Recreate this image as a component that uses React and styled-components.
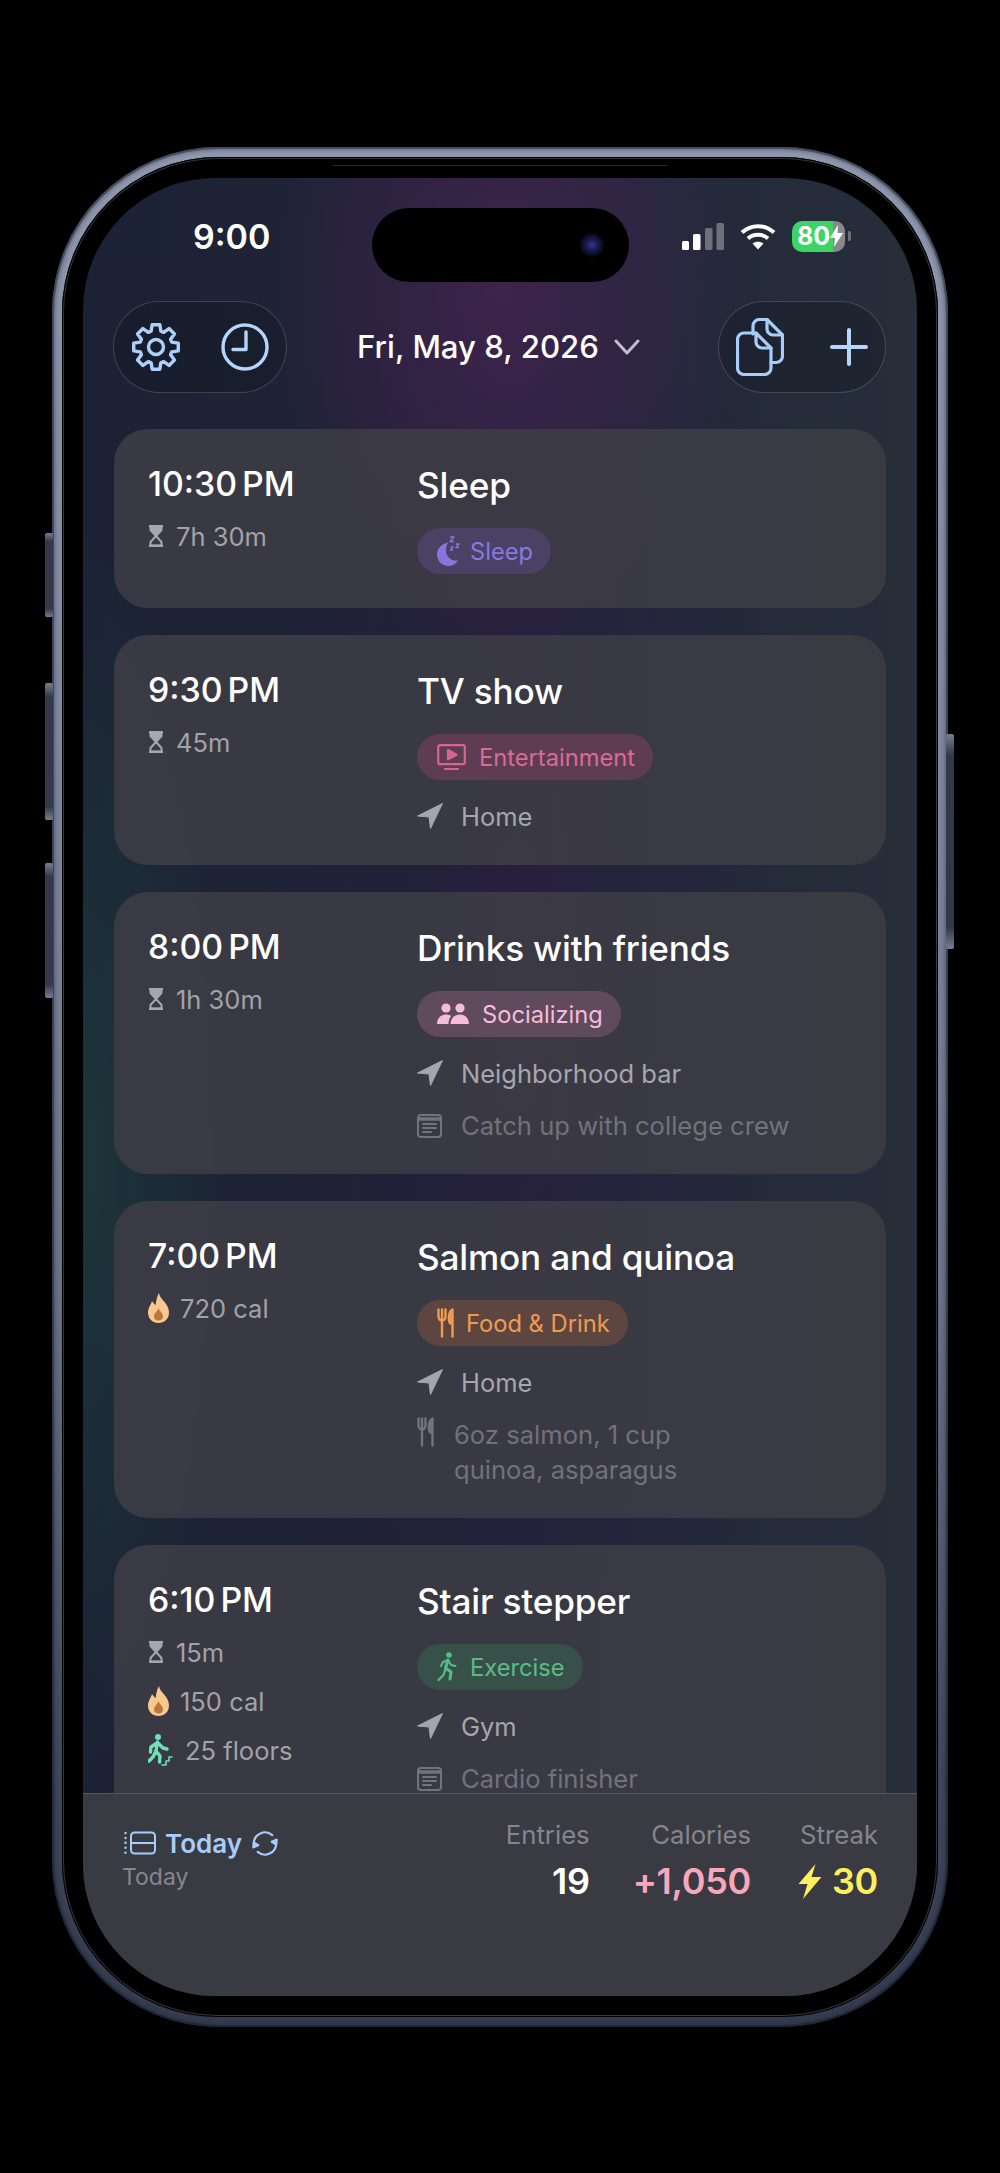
import React from "react";
import styled, { createGlobalStyle } from "styled-components";

const GlobalStyle = createGlobalStyle`
  html, body {
    margin: 0;
    background: #000;
  }
  body {
    width: 1000px;
    height: 2173px;
    overflow: hidden;
    font-family: Inter, "Liberation Sans", sans-serif;
  }
`;

const Page = styled.div`
  width: 1000px;
  height: 2173px;
  padding: 147px 0 0 52px;
  box-sizing: border-box;
`;

const Frame = styled.div`
  position: relative;
  width: 896px;
  height: 1880px;
  box-sizing: border-box;
  padding: 10px;
  border-radius: 166px;
  background: linear-gradient(180deg, #8f97ae 0%, #7f88a0 30%, #6a7389 60%, #3f475c 86%, #343b4f 100%);
  box-shadow: inset 0 0 0 2px rgba(18, 22, 34, 0.45), inset 0 0 3px 4px rgba(30, 34, 48, 0.25);
`;

const SideButton = styled.div`
  position: absolute;
  top: ${(p) => p.$top}px;
  height: ${(p) => p.$h}px;
  ${(p) => (p.$right ? "right: -6px;" : "left: -7px;")}
  width: 8px;
  border-radius: 2px;
  background: linear-gradient(180deg, #767e94, #333949 10%, #333949 90%, #767e94);
`;

const Bezel = styled.div`
  position: relative;
  height: 100%;
  box-sizing: border-box;
  padding: 21px;
  border-radius: 156px;
  background: #000;
  box-shadow: inset 0 0 0 1px #000, inset 0 0 0 2px #34363c;
`;

const Rim = styled.div`
  position: absolute;
  top: 8px;
  left: 270px;
  width: 336px;
  height: 1px;
  background: #24262c;
`;

const Screen = styled.div`
  position: relative;
  height: 100%;
  display: flex;
  flex-direction: column;
  overflow: hidden;
  border-radius: 132px;
  color: #fff;
  background:
    radial-gradient(ellipse 240px 380px at 50% 110px, rgba(78, 36, 88, 0.6), transparent 100%),
    radial-gradient(ellipse 260px 1100px at 52% 800px, rgba(46, 26, 68, 0.5), transparent 100%),
    radial-gradient(ellipse 150px 620px at 0% 980px, rgba(28, 72, 62, 0.5), transparent 100%),
    linear-gradient(90deg, #1c2235 0%, #1f2335 40%, #22283a 70%, #272e39 100%);
`;

const StatusBar = styled.div`
  height: 116px;
  margin-bottom: 7px;
  padding: 0 66px 0 110px;
  display: flex;
  align-items: center;
  justify-content: space-between;
`;

const Clock = styled.span`
  font-size: 34px;
  font-weight: 600;
`;

const Island = styled.div`
  position: absolute;
  top: 30px;
  left: 289px;
  width: 257px;
  height: 74px;
  border-radius: 37px;
  background: #000;
`;

const Lens = styled.div`
  position: absolute;
  top: 25px;
  right: 25px;
  width: 24px;
  height: 24px;
  border-radius: 50%;
  background: radial-gradient(circle, #2f3590 0%, #181a4c 36%, #07070f 70%, #050509 100%);
`;

const StatusIcons = styled.div`
  display: flex;
  align-items: center;
  gap: 16px;
`;

const Battery = styled.div`
  display: flex;
  align-items: center;
  width: 53px;
  height: 31px;
  padding-left: 5px;
  box-sizing: border-box;
  border-radius: 10px;
  font-size: 25px;
  font-weight: 700;
  line-height: 1;
  background: linear-gradient(90deg, #3dd466 78%, #87878c 78%);
`;

const BatteryTip = styled.div`
  width: 3px;
  height: 10px;
  margin-left: -13px;
  border-radius: 0 2px 2px 0;
  background: #6d6f76;
`;

const Toolbar = styled.div`
  padding: 0 31px 0 30px;
  display: flex;
  align-items: center;
  justify-content: space-between;
`;

const Pill = styled.div`
  width: ${(p) => p.$w}px;
  height: 92px;
  box-sizing: border-box;
  padding: 0 17px;
  display: flex;
  align-items: center;
  justify-content: space-between;
  border-radius: 46px;
  border: 1.5px solid rgba(255, 255, 255, 0.17);
  background: rgba(16, 18, 26, 0.28);
`;

const DateButton = styled.div`
  display: flex;
  align-items: center;
  gap: 15px;
  font-size: 31.2px;
  font-weight: 500;
  margin-right: 8px;
`;

const List = styled.div`
  flex: 1;
  min-height: 0;
  overflow: hidden;
  padding: 36px 31px 0;
  display: flex;
  flex-direction: column;
  gap: 27px;
`;

const Card = styled.div`
  flex: none;
  min-height: 179px;
  box-sizing: border-box;
  padding: 36px 34px 31px;
  display: grid;
  grid-template-columns: 269px 1fr;
  border-radius: 34px;
  background: rgba(60, 60, 68, 0.92);
`;

const Side = styled.div`
  display: flex;
  flex-direction: column;
  gap: 13px;
`;

const Time = styled.div`
  height: 40px;
  line-height: 38px;
  font-size: 33.8px;
  font-weight: 500;
  word-spacing: -4px;
`;

const Meta = styled.div`
  height: 36px;
  display: flex;
  align-items: center;
  gap: ${(p) => p.$gap || 12}px;
  font-size: 25.5px;
  color: #a1a2aa;
`;

const Main = styled.div`
  display: flex;
  flex-direction: column;
  align-items: flex-start;
  gap: 17px;
`;

const Title = styled.div`
  height: 40px;
  margin-bottom: 6px;
  line-height: 40px;
  font-size: 35.2px;
  font-weight: 500;
  letter-spacing: -0.2px;
`;

const Chip = styled.div`
  height: 46px;
  box-sizing: border-box;
  padding: 0 18px 0 20px;
  display: flex;
  align-items: center;
  gap: ${(p) => p.$gap}px;
  border-radius: 23px;
  font-size: 23.7px;
  color: ${(p) => p.$color};
  background: ${(p) => p.$bg};
`;

const Place = styled.div`
  height: 36px;
  margin-top: 1px;
  display: flex;
  align-items: center;
  gap: 18px;
  font-size: 25.5px;
  color: #a6a6ae;
`;

const Note = styled.div`
  display: flex;
  align-items: ${(p) => (p.$top ? "flex-start" : "center")};
  gap: ${(p) => p.$gap}px;
  font-size: 25.6px;
  line-height: 35px;
  color: #71727a;
`;

const Footer = styled.div`
  flex: none;
  height: 203px;
  box-sizing: border-box;
  padding: 22px 39px 0 39px;
  display: flex;
  justify-content: space-between;
  border-top: 1.5px solid #55565d;
  background: linear-gradient(90deg, #393b42, #3a3a43);
`;

const Range = styled.div`
  padding-top: 4px;
`;

const RangeTop = styled.div`
  display: flex;
  align-items: center;
  height: 46px;
  padding-left: 2px;
  gap: 9px;
  font-size: 26px;
  font-weight: 600;
  color: #a9cdfb;
`;

const RangeSub = styled.div`
  margin-top: -6px;
  line-height: 34px;
  font-size: 23px;
  color: #86878e;
`;

const Stats = styled.div`
  display: flex;
`;

const Stat = styled.div`
  margin-left: ${(p) => p.$gap || 0}px;
  display: flex;
  flex-direction: column;
  align-items: flex-end;
`;

const StatLabel = styled.div`
  line-height: 38px;
  font-size: 25.7px;
  color: #85868d;
`;

const StatValue = styled.div`
  margin-top: 5px;
  display: flex;
  align-items: center;
  gap: 10px;
  line-height: 44px;
  font-size: 36px;
  font-weight: 600;
  letter-spacing: -0.3px;
  color: ${(p) => p.$color};
`;

const gearPath = () => {
  const pts = [];
  for (let i = 0; i < 8; i++) {
    const a = (i * Math.PI) / 4 - Math.PI / 2;
    [
      [16.5, -0.3],
      [22.6, -0.17],
      [22.6, 0.17],
      [16.5, 0.3],
    ].forEach(([r, d]) => {
      pts.push(`${(25 + r * Math.cos(a + d)).toFixed(2)} ${(25 + r * Math.sin(a + d)).toFixed(2)}`);
    });
  }
  return `M${pts.join(" L")} Z`;
};

const Gear = () => (
  <svg width="50" height="50" viewBox="0 0 50 50" fill="none" stroke="#add0fb" strokeWidth="3.4" strokeLinejoin="round">
    <path d={gearPath()} />
    <circle cx="25" cy="25" r="7.5" />
  </svg>
);

const ClockIcon = () => (
  <svg width="48" height="48" viewBox="0 0 48 48" fill="none" stroke="#b4d4fb" strokeWidth="3.4" strokeLinecap="round" strokeLinejoin="round">
    <circle cx="24" cy="24" r="22" />
    <path d="M25 9 V26.5 H12" />
  </svg>
);

const CopyIcon = () => (
  <svg width="48" height="58" viewBox="0 0 48 58" fill="none" stroke="#a9cdfb" strokeWidth="3.2" strokeLinecap="round" strokeLinejoin="round">
    <path d="M8 15 H20 L35 30 V50 a6.5 6.5 0 0 1 -6.5 6.5 H8 a6.5 6.5 0 0 1 -6.5 -6.5 V21.5 a6.5 6.5 0 0 1 6.5 -6.5 Z" />
    <path d="M20 15 V24 a6 6 0 0 0 6 6 H35" />
    <path d="M17 16 V8 a6.5 6.5 0 0 1 6.5 -6.5 H31 L46.5 17 V38 a6.5 6.5 0 0 1 -6.5 6.5 H35" />
    <path d="M31 1.5 V11 a6 6 0 0 0 6 6 H46.5" />
  </svg>
);

const PlusIcon = () => (
  <svg width="38" height="38" viewBox="0 0 38 38" stroke="#b6d6fc" strokeWidth="4" strokeLinecap="round">
    <path d="M19 2 V36 M2 19 H36" />
  </svg>
);

const Chevron = () => (
  <svg width="26" height="16" viewBox="0 0 26 16" fill="none" stroke="#c3bccb" strokeWidth="3" strokeLinecap="round" strokeLinejoin="round">
    <path d="M2 2 L13 14 L24 2" />
  </svg>
);

const Signal = () => (
  <svg width="42" height="27" viewBox="0 0 42 27">
    <rect x="0" y="18" width="7" height="9" rx="1.5" fill="#fff" />
    <rect x="11" y="11" width="7.5" height="16" rx="1.5" fill="#fff" />
    <rect x="23" y="5" width="7.5" height="22" rx="1.5" fill="#6f7079" />
    <rect x="34.5" y="0" width="7.5" height="27" rx="1.5" fill="#6f7079" />
  </svg>
);

const Wifi = () => (
  <svg width="36" height="27" viewBox="0 0 36 27" fill="none" stroke="#fff" strokeWidth="4">
    <path d="M2 9.5 C11 1 25 1 34 9.5" />
    <path d="M8 15.5 C13.5 10.5 22.5 10.5 28 15.5" />
    <path d="M18 26.5 L12.5 20.5 C15.5 18 20.5 18 23.5 20.5 Z" fill="#fff" stroke="none" />
  </svg>
);

const BoltSmall = () => (
  <svg width="13" height="22" viewBox="0 0 13 22" fill="#fff">
    <path d="M8 0 L0 13 H5 L4 22 L13 8 H7.5 Z" />
  </svg>
);

const Hourglass = () => (
  <svg width="16" height="22" viewBox="0 0 16 22" fill="none" stroke="#a6a7ae" strokeWidth="2" strokeLinejoin="round">
    <path d="M1 1 H15 M1 21 H15" strokeWidth="2.4" />
    <path d="M2.5 1.5 V5 L8 11 L13.5 5 V1.5 Z" fill="#a6a7ae" />
    <path d="M8 11 L2.5 17 V20.5 H13.5 V17 Z" />
  </svg>
);

const Flame = () => (
  <svg width="21" height="30" viewBox="0 0 21 30">
    <path d="M11 0 C12 7 21 10 21 19.5 C21 26 16 30 10.5 30 C5 30 0 26 0 19.5 C0 14.5 3 12 4 8 C5.5 10 6.5 11.5 7.5 12 C8.5 8 8.5 4 11 0 Z" fill="#f9c891" />
    <path d="M10.5 15 C11 18 15 20 15 23.5 C15 26 13 27.5 10.5 27.5 C8 27.5 6 26 6 23.5 C6 20 9.5 18.5 10.5 15 Z" fill="#b9793d" />
  </svg>
);

const Climber = () => (
  <svg width="25" height="32" viewBox="0 0 25 32" fill="none" stroke="#6fe0b8" strokeLinecap="round" strokeLinejoin="round">
    <circle cx="10" cy="3" r="3" fill="#6fe0b8" stroke="none" />
    <path d="M9.5 8 L8 17 M9 9 L3 13 L2.5 18 M10 9 L15 14 L19 15" strokeWidth="3.4" />
    <path d="M8 17 L12 22 L11.5 28 M8 17 L5 23 L1 27" strokeWidth="3.4" />
    <path d="M14 31 H18 V27 H21 V23 H24" strokeWidth="1.6" />
  </svg>
);

const Moon = () => (
  <svg width="23" height="30" viewBox="0 0 23 30" fill="none">
    <path d="M11 6.5 C4 8 0 13 0 18.5 C0 25 5 30 11.5 30 C15.5 30 19 28 21 24.5 C14 25.5 8.5 20 9 13.5 C9.2 11 10 8.5 11 6.5 Z" fill="#8875dc" />
    <path d="M13 1 H17 L13 5.5 H17 M19 8 H22 L19 11.5 H22 M13.5 11 H16 L13.5 14 H16" stroke="#8875dc" strokeWidth="1.4" strokeLinejoin="round" />
  </svg>
);

const TvPlay = () => (
  <svg width="29" height="26" viewBox="0 0 29 26" fill="none" stroke="#d8658f" strokeWidth="2.2" strokeLinecap="round" strokeLinejoin="round">
    <rect x="1.2" y="1.2" width="26.6" height="19" rx="2" />
    <path d="M8 25 H21" />
    <path d="M11 6 L19.5 10.7 L11 15.4 Z" fill="#d8658f" />
  </svg>
);

const Users = () => (
  <svg width="32" height="22" viewBox="0 0 32 22" fill="#f5bcdc">
    <circle cx="9" cy="5" r="4.6" />
    <circle cx="23" cy="5" r="4.6" />
    <path d="M0 21 C0 15 4 11.5 9 11.5 C11 11.5 12.8 12 14.2 13 C12.4 15 11.6 17.5 11.4 21 Z" />
    <path d="M13.6 21 C13.6 15 17.6 11.5 23 11.5 C28 11.5 32 15 32 21 Z" />
  </svg>
);

const Utensils = ({ color = "#ef9a52" }) => (
  <svg width="18" height="30" viewBox="0 0 18 30" fill="none" stroke={color} strokeWidth="2.4" strokeLinecap="round" strokeLinejoin="round">
    <path d="M1.5 1.5 V8 C1.5 11 3 12.5 5 12.5 C7 12.5 8.5 11 8.5 8 V1.5 M5 1.5 V28.5" />
    <path d="M15.5 28.5 V1.5 C12.5 3 11.8 7 11.8 10.5 C11.8 14 13 16 15.5 16" fill={color} />
  </svg>
);

const Runner = () => (
  <svg width="20" height="30" viewBox="0 0 20 30" fill="none" stroke="#58bd85" strokeLinecap="round" strokeLinejoin="round">
    <circle cx="12" cy="3" r="2.8" fill="#58bd85" stroke="none" />
    <path d="M11 8 L8.5 16 L14 20 L13 27" strokeWidth="3" />
    <path d="M8.5 17 L6.5 23 L1.5 28" strokeWidth="2.2" />
    <path d="M11 8 L6 10 L4 14 M11 8 L14 13 L18.5 14" strokeWidth="2" />
  </svg>
);

const Arrow = () => (
  <svg width="26" height="26" viewBox="0 0 26 26" fill="#a5a5ad">
    <path d="M25.5 0.5 L0.5 13 L12 14 L13.5 25.5 Z" strokeLinejoin="round" stroke="#a5a5ad" strokeWidth="1" />
  </svg>
);

const NoteIcon = () => (
  <svg width="25" height="24" viewBox="0 0 25 24" fill="none" stroke="#72737b" strokeWidth="2" strokeLinecap="round">
    <rect x="1" y="1" width="23" height="22" rx="3" />
    <path d="M1 5 H24" strokeWidth="3.5" strokeLinecap="butt" />
    <path d="M6 10 H19 M6 14 H19 M6 18 H14" />
  </svg>
);

const Sheet = () => (
  <svg width="32" height="24" viewBox="0 0 32 24" fill="none" stroke="#a9cdfb" strokeWidth="2" strokeLinecap="round">
    <rect x="7" y="1.5" width="24" height="21" rx="3.5" />
    <path d="M7 12 H31" />
    <path d="M1.5 2 V22" strokeDasharray="0.1 4.8" strokeWidth="2.4" />
  </svg>
);

const Sync = () => (
  <svg width="28" height="27" viewBox="1 0 25 24" fill="none" stroke="#a9cdfb" strokeWidth="1.9" strokeLinecap="round" strokeLinejoin="round">
    <path d="M3.5 12 A10 10 0 0 1 20 4.5" />
    <path d="M23.5 12 A10 10 0 0 1 7 19.5" />
    <path d="M24 8.5 L23.5 13 L19.5 10.5 Z" fill="#a9cdfb" />
    <path d="M3 15.5 L3.5 11 L7.5 13.5 Z" fill="#a9cdfb" />
  </svg>
);

const Bolt = () => (
  <svg width="24" height="35" viewBox="0 0 23 35" fill="#fdf05c">
    <path d="M17 0 L0 20 H9 L4.5 35 L23 13 H13 Z" />
  </svg>
);

const App = () => {
  return (
    <Page>
      <GlobalStyle />
      <Frame>
        <SideButton $top={386} $h={84} />
        <SideButton $top={536} $h={137} />
        <SideButton $top={716} $h={135} />
        <SideButton $right $top={587} $h={215} />
        <Bezel>
          <Rim />
          <Screen>
            <Island>
              <Lens />
            </Island>
            <StatusBar>
              <Clock>9:00</Clock>
              <StatusIcons>
                <Signal />
                <Wifi />
                <Battery>
                  80
                  <BoltSmall />
                </Battery>
                <BatteryTip />
              </StatusIcons>
            </StatusBar>
            <Toolbar>
              <Pill $w={174}>
                <Gear />
                <ClockIcon />
              </Pill>
              <DateButton>
                Fri, May 8, 2026
                <Chevron />
              </DateButton>
              <Pill $w={168}>
                <CopyIcon />
                <PlusIcon />
              </Pill>
            </Toolbar>
            <List>
              <Card>
                <Side>
                  <Time>10:30 PM</Time>
                  <Meta>
                    <Hourglass />
                    7h 30m
                  </Meta>
                </Side>
                <Main>
                  <Title>Sleep</Title>
                  <Chip $gap={10} $color="#8a78e0" $bg="#4a4264">
                    <Moon />
                    Sleep
                  </Chip>
                </Main>
              </Card>
              <Card>
                <Side>
                  <Time>9:30 PM</Time>
                  <Meta>
                    <Hourglass />
                    45m
                  </Meta>
                </Side>
                <Main>
                  <Title>TV show</Title>
                  <Chip $gap={13} $color="#db6a97" $bg="#5e3d52">
                    <TvPlay />
                    Entertainment
                  </Chip>
                  <Place>
                    <Arrow />
                    Home
                  </Place>
                </Main>
              </Card>
              <Card>
                <Side>
                  <Time>8:00 PM</Time>
                  <Meta>
                    <Hourglass />
                    1h 30m
                  </Meta>
                </Side>
                <Main>
                  <Title>Drinks with friends</Title>
                  <Chip $gap={13} $color="#f5bcdc" $bg="#5f4a5e">
                    <Users />
                    Socializing
                  </Chip>
                  <Place>
                    <Arrow />
                    Neighborhood bar
                  </Place>
                  <Note $gap={19}>
                    <NoteIcon />
                    Catch up with college crew
                  </Note>
                </Main>
              </Card>
              <Card>
                <Side>
                  <Time>7:00 PM</Time>
                  <Meta $gap={11}>
                    <Flame />
                    720 cal
                  </Meta>
                </Side>
                <Main>
                  <Title>Salmon and quinoa</Title>
                  <Chip $gap={11} $color="#f09a50" $bg="#5e4640">
                    <Utensils />
                    Food &amp; Drink
                  </Chip>
                  <Place>
                    <Arrow />
                    Home
                  </Place>
                  <Note $gap={19} $top>
                    <Utensils color="#72737b" />
                    <div>
                      6oz salmon, 1 cup
                      <br />
                      quinoa, asparagus
                    </div>
                  </Note>
                </Main>
              </Card>
              <Card>
                <Side>
                  <Time>6:10 PM</Time>
                  <Meta>
                    <Hourglass />
                    15m
                  </Meta>
                  <Meta $gap={11}>
                    <Flame />
                    150 cal
                  </Meta>
                  <Meta>
                    <Climber />
                    25 floors
                  </Meta>
                </Side>
                <Main>
                  <Title>Stair stepper</Title>
                  <Chip $gap={13} $color="#58bd85" $bg="#38504a">
                    <Runner />
                    Exercise
                  </Chip>
                  <Place>
                    <Arrow />
                    Gym
                  </Place>
                  <Note $gap={19}>
                    <NoteIcon />
                    Cardio finisher
                  </Note>
                </Main>
              </Card>
            </List>
            <Footer>
              <Range>
                <RangeTop>
                  <Sheet />
                  Today
                  <Sync />
                </RangeTop>
                <RangeSub>Today</RangeSub>
              </Range>
              <Stats>
                <Stat>
                  <StatLabel>Entries</StatLabel>
                  <StatValue $color="#fff">19</StatValue>
                </Stat>
                <Stat $gap={43}>
                  <StatLabel>Calories</StatLabel>
                  <StatValue $color="#f9a8bc">+1,050</StatValue>
                </Stat>
                <Stat $gap={47}>
                  <StatLabel>Streak</StatLabel>
                  <StatValue $color="#fdf05c">
                    <Bolt />
                    30
                  </StatValue>
                </Stat>
              </Stats>
            </Footer>
          </Screen>
        </Bezel>
      </Frame>
    </Page>
  );
};

export default App;
